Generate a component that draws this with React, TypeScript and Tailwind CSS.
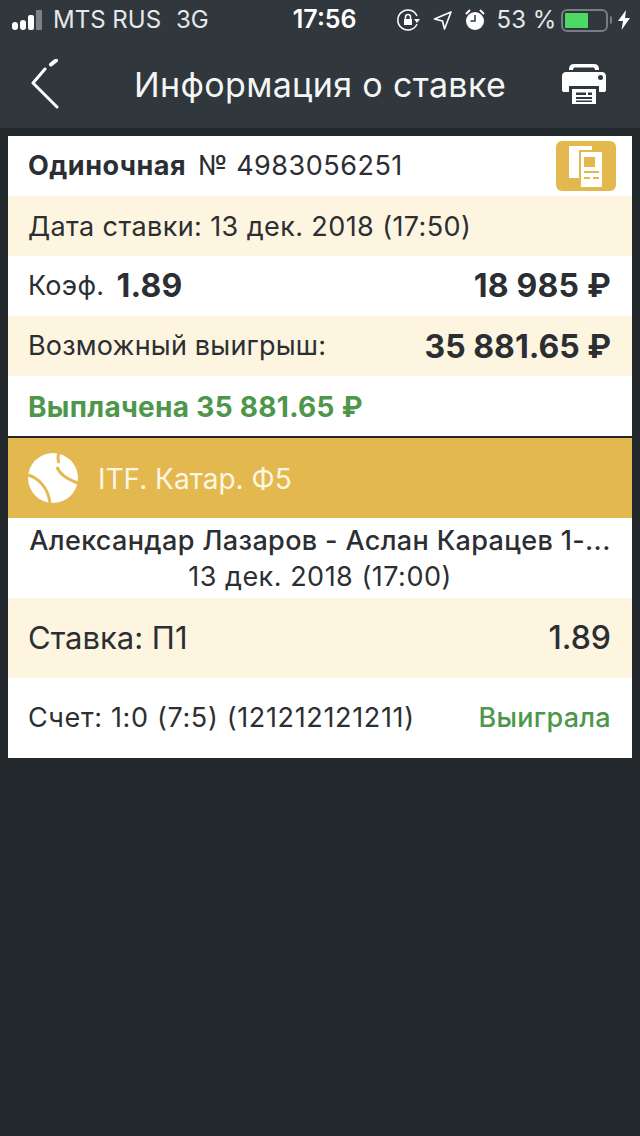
const font = { fontFamily: "Inter, 'Noto Sans', sans-serif" };

function BackIcon() {
  return (
    <svg width="30" height="50" viewBox="0 0 30 50" fill="none" stroke="white" strokeLinecap="round" strokeLinejoin="round">
      <path d="M27 48 L3 24 L15 10" strokeWidth="3" />
      <path d="M21 5.500 L26 1.500" strokeWidth="4" />
    </svg>
  );
}

function PrinterIcon() {
  return (
    <svg width="44" height="42" viewBox="0 0 44 42" fill="white">
      <path d="M7 7 C7 2 9 1 13 1 H31 C35 1 37 2 37 7 H33 C33 5 32 4.500 30 4.500 H14 C12 4.500 11 5 11 7 Z" />
      <path d="M4 9 H40 C42.500 9 44 11 44 13 V27 C44 28.500 43 29 42 29 H37 V23 H7 V29 H2 C1 29 0 28.500 0 27 V13 C0 11 1.500 9 4 9 Z" />
      <circle cx="38.500" cy="14.500" r="2.500" fill="#30373d" />
      <path fillRule="evenodd" d="M10 26 H34 V41 H10 Z M14 29.500 V32 H24 V29.500 Z M26 29.500 V32 H30 V29.500 Z M14 34 V36 H30 V34 Z M14 37.500 V39 H30 V37.500 Z" />
    </svg>
  );
}

function CopyIcon() {
  return (
    <div className="flex h-[50px] w-[60px] items-center justify-center rounded-[6px] bg-[#e3b94f]">
      <svg width="34" height="41" viewBox="0 0 34 41">
        <path d="M0 0 H23 V4 H10 V32 H0 Z" fill="white" />
        <path fillRule="evenodd" d="M12 6 H33 V41 H12 Z M15 11 V21 H26 V11 Z M15 25 V27 H30 V25 Z M15 31 V33 H21 V31 Z M24 31 V33 H30 V31 Z" fill="white" />
      </svg>
    </div>
  );
}

function TennisIcon() {
  return (
    <svg width="50" height="50" viewBox="0 0 50 50">
      <circle cx="25" cy="25" r="25" fill="white" />
      <path d="M31 0 C29 4 30 7 31 10 M29 14 C32 22 41 27 50 30" fill="none" stroke="#e3b94f" strokeWidth="3" />
      <path d="M0 22 C10 25 20 34 22 50" fill="none" stroke="#e3b94f" strokeWidth="3" />
    </svg>
  );
}

function StatusBar() {
  return (
    <div className="flex h-10 items-center text-[24px] text-[#e6e8e9]">
      <div className="ml-3 flex items-end gap-[2px]">
        <span className="h-[8px] w-[6px] rounded-[3px] bg-white" />
        <span className="h-[10px] w-[6px] rounded-[3px] bg-white" />
        <span className="h-[15px] w-[6px] rounded-[2px] bg-white" />
        <span className="h-[20px] w-[6px] rounded-[1px] bg-[#7d8285]" />
      </div>
      <span className="ml-[11px]">MTS RUS</span>
      <span className="ml-[15px]">3G</span>
      <span className="ml-[84px] text-[25px] font-semibold text-white">17:56</span>
      <div className="ml-[40px] flex items-center">
        <svg width="24" height="22" viewBox="0 0 24 22" fill="none" stroke="white" strokeWidth="1.500">
          <path d="M20 15 A10 10 0 1 1 20 7" />
          <path d="M17 10 H23 L20 14 Z" fill="white" stroke="none" />
          <path d="M7 10 H15 V16 H7 Z" fill="white" stroke="none" />
          <path d="M8.500 10 V8 A2.500 2.500 0 0 1 13.500 8 V10" />
        </svg>
        <svg className="ml-[12px]" width="20" height="20" viewBox="0 0 20 20" fill="none" stroke="white" strokeWidth="1.600" strokeLinejoin="round">
          <path d="M18 2 L1.500 9 L9.500 11 L11.500 19 Z" />
        </svg>
        <svg className="ml-[12px]" width="20" height="22" viewBox="0 0 20 22">
          <circle cx="10" cy="12" r="9" fill="white" />
          <path d="M10 6 V12 H5.500" fill="none" stroke="#30373d" strokeWidth="1.500" />
          <path d="M1 5 L5 1 M15 1 L19 5" stroke="white" strokeWidth="2" />
        </svg>
      </div>
      <span className="ml-[12px]">53 %</span>
      <div className="ml-[5px] flex items-center">
        <div className="h-[23px] w-[47px] rounded-[6px] border-2 border-[#787d81] p-[2px]">
          <div className="h-full w-[23px] rounded-[1px] bg-[#4cd964]" />
        </div>
        <span className="ml-[2px] h-[8px] w-[2px] rounded-r-[2px] bg-[#787d81]" />
      </div>
      <svg className="ml-[6px]" width="12" height="20" viewBox="0 0 12 20" fill="white">
        <path d="M8 0 L0 11 H5 L3.500 20 L12 8 H7 Z" />
      </svg>
    </div>
  );
}

export default function App() {
  return (
    <div className="min-h-[1136px] bg-[#22282c]" style={font}>
      <header className="h-[128px] bg-[#30373d]">
        <StatusBar />
        <div className="flex h-[88px] items-center">
          <div className="ml-[30px] mb-[1px]">
            <BackIcon />
          </div>
          <h1 className="ml-[74px] text-[34px] font-normal tracking-[0.35px] text-[#f4f5f5]">Информация о ставке</h1>
          <div className="ml-[56px]">
            <PrinterIcon />
          </div>
        </div>
      </header>

      <main className="px-2 pt-2">
        <div className="bg-white text-[#2b2f33]">
          <div className="flex h-[60px] items-center justify-between pl-5 pr-[16px]">
            <div className="text-[27px] tracking-[0.5px]">
              <span className="font-bold">Одиночная</span>
              <span className="ml-3">№ 4983056251</span>
            </div>
            <CopyIcon />
          </div>
          <div className="flex h-[60px] items-center bg-[#fdf5df] pl-5 pt-[2px] text-[27px] tracking-[0.4px]">Дата ставки: 13 дек. 2018 (17:50)</div>
          <div className="flex h-[60px] items-center justify-between pl-5 pr-[21px]">
            <div className="flex items-center">
              <span className="text-[27px] tracking-[0.3px]">Коэф.</span>
              <span className="ml-3 text-[32px] font-bold tracking-[0.2px]">1.89</span>
            </div>
            <span className="text-[32px] font-bold tracking-[0.2px]">18 985 ₽</span>
          </div>
          <div className="flex h-[60px] items-center justify-between bg-[#fdf5df] pl-5 pr-[21px] pt-[1px]">
            <span className="text-[27px] tracking-[0.2px]">Возможный выигрыш:</span>
            <span className="text-[32px] font-bold">35 881.65 ₽</span>
          </div>
          <div className="flex h-[60px] items-center pl-5 pt-[2px] text-[28px] font-bold tracking-[0.3px] text-[#4d964a]">Выплачена 35 881.65 ₽</div>
          <div className="h-[2px] bg-[#22282c]" />
          <div className="flex h-[80px] items-center bg-[#e3b94f] pl-5">
            <TennisIcon />
            <span className="ml-5 pt-[1px] text-[28px] text-[#fdf6e3]">ITF. Катар. Ф5</span>
          </div>
          <div className="flex h-[80px] flex-col items-center justify-center pt-[1px] text-[27px] leading-[36px] tracking-[0.35px]">
            <span className="font-medium">Александар Лазаров - Аслан Карацев 1-...</span>
            <span className="tracking-[0.5px]">13 дек. 2018 (17:00)</span>
          </div>
          <div className="flex h-[80px] items-center justify-between bg-[#fdf5df] pl-5 pr-[21px]">
            <span className="text-[31px]">Ставка: П1</span>
            <span className="text-[32px] font-medium">1.89</span>
          </div>
          <div className="flex h-[80px] items-center justify-between pl-5 pr-[21px]">
            <span className="text-[27px] tracking-[0.65px]">Счет: 1:0 (7:5) (121212121211)</span>
            <span className="text-[27px] font-medium tracking-[0.3px] text-[#4d964a]">Выиграла</span>
          </div>
        </div>
      </main>
    </div>
  );
}
